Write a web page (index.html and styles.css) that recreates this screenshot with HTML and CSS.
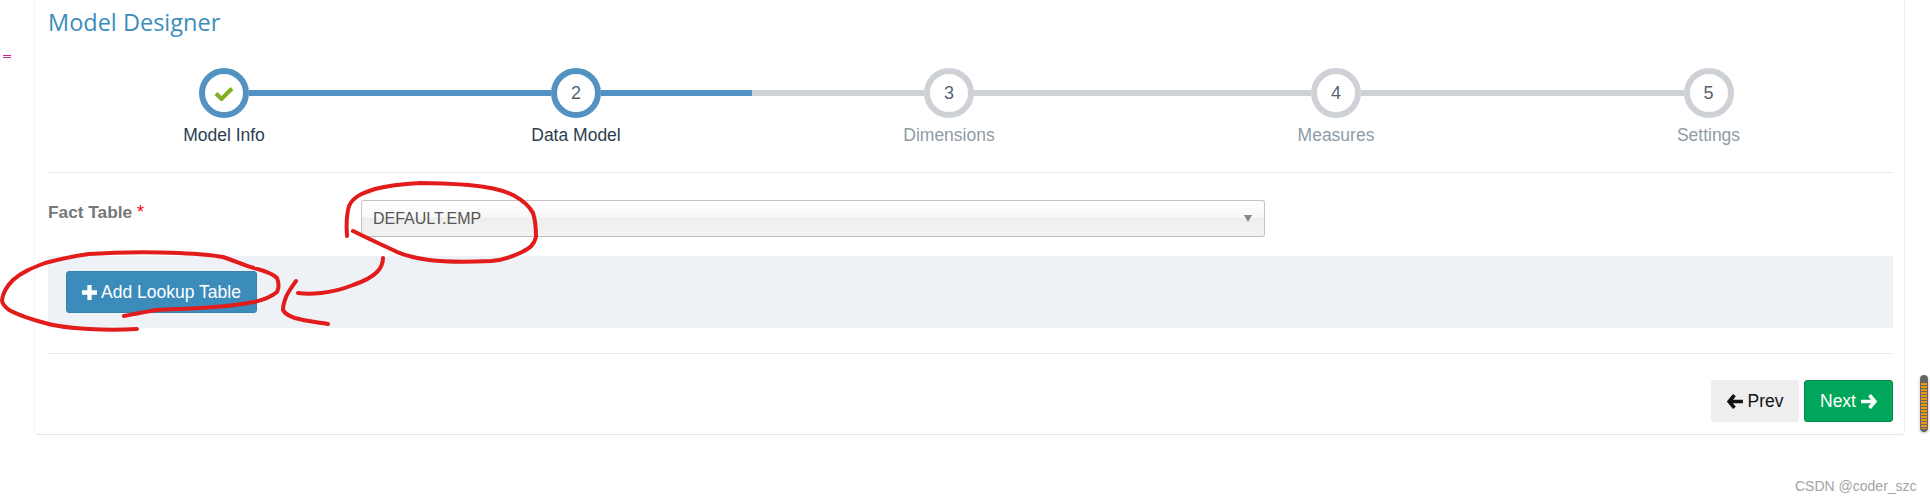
FILE: index.html
```html
<!DOCTYPE html>
<html>
<head>
    <title>Model Designer</title>
    <link rel="stylesheet" href="styles.css">
</head>
<body>
    <span class="stray-mark"></span>
    <div class="card">
        <h1 class="title">Model Designer</h1>

        <div class="wizard">
            <div class="step done">
                <div class="track">
                    <span class="seg none"></span>
                    <span class="circle">
                        <svg class="check" viewBox="0 0 20 16" width="20" height="16"><path d="M2 8.5 7.5 14 18 3.5" fill="none" stroke="#7fb21d" stroke-width="4"/></svg>
                    </span>
                    <span class="seg"></span>
                </div>
                <div class="step-label">Model Info</div>
            </div>
            <div class="step done">
                <div class="track">
                    <span class="seg"></span>
                    <span class="circle">2</span>
                    <span class="seg"></span>
                </div>
                <div class="step-label">Data Model</div>
            </div>
            <div class="step">
                <div class="track">
                    <span class="seg"></span>
                    <span class="circle">3</span>
                    <span class="seg"></span>
                </div>
                <div class="step-label">Dimensions</div>
            </div>
            <div class="step">
                <div class="track">
                    <span class="seg"></span>
                    <span class="circle">4</span>
                    <span class="seg"></span>
                </div>
                <div class="step-label">Measures</div>
            </div>
            <div class="step">
                <div class="track">
                    <span class="seg"></span>
                    <span class="circle">5</span>
                    <span class="seg none"></span>
                </div>
                <div class="step-label">Settings</div>
            </div>
        </div>

        <div class="form-row">
            <label class="field-label">Fact Table <span class="required">*</span></label>
            <div class="select-box">
                <span>DEFAULT.EMP</span>
                <span class="caret"></span>
            </div>
        </div>

        <div class="lookup-band">
            <button class="btn btn-add">
                <svg viewBox="0 0 14 14" width="15" height="15"><path d="M5 0h4v5h5v4H9v5H5V9H0V5h5z" fill="#fff"/></svg>
                Add Lookup Table
            </button>
        </div>

        <div class="actions">
            <button class="btn btn-prev">
                <svg viewBox="0 0 16 14" width="17" height="15"><path d="M7 1 2 7l5 6M2.5 7H15" fill="none" stroke="#111" stroke-width="3.4"/></svg>
                Prev
            </button>
            <button class="btn btn-next">
                Next
                <svg viewBox="0 0 16 14" width="17" height="15"><path d="M9 1l5 6-5 6M13.5 7H1" fill="none" stroke="#fff" stroke-width="3.4"/></svg>
            </button>
        </div>
    </div>

    <div class="scroll-thumb"></div>
    <div class="watermark">CSDN @coder_szc</div>

    <!-- red pen marks drawn over the screenshot -->
    <svg class="pen" viewBox="0 0 1930 502" width="1930" height="502">
        <path d="M347 236C346 222 347 213 349 206C353 197 362 193 375 189C390 185 402 184 420 183C440 183 455 184 469 185C490 187 505 191 513 195C524 201 530 207 533 213C536 222 536 230 536 237C534 245 530 248 522 252C512 257 503 260 491 261C470 262 445 262 429 260C415 258 402 255 393 250C380 244 365 237 353 231"/>
        <path d="M383 258C383 264 381 268 377 272C370 279 362 282 353 285C343 289 332 292 321 293C312 294 305 294 298 293"/>
        <path d="M296 281C291 288 288 292 286 297C284 302 283 306 283 310C285 314 289 316 295 318C305 321 316 322 328 324"/>
        <path d="M137 329C120 330 105 330 89 329C72 328 58 327 45 323C30 319 18 315 9 310C4 306 2 303 2 300C3 292 7 286 13 280C22 272 32 268 45 263C60 259 74 256 89 254C120 252 150 252 179 253C198 254 212 255 223 257C235 261 244 265 254 268C265 271 273 274 277 278C279 283 279 288 277 292C271 297 263 300 254 302C238 305 220 307 201 308C185 309 170 309 156 310C145 312 134 314 124 316"/>
    </svg>
</body>
</html>
```

FILE: styles.css
```css
* {
    box-sizing: border-box;
}
html, body {
    margin: 0;
    height: 502px;
    overflow: hidden;
}
body {
    position: relative;
    background: #fff;
    font-family: "Liberation Sans", Arial, sans-serif;
    color: #333;
}
.card {
    width: 1871px;
    height: 435px;
    margin-left: 34px;
    padding: 0 11px 0 13px;
    background: #fff;
    border-left: 1px solid #f6f6f6;
    border-bottom: 1px solid #e6e6e6;
    border-right: 1px solid #f2f2f2;
    border-radius: 0 0 4px 4px;
}
.title {
    margin: 0;
    padding-top: 7px;
    height: 68px;
    font-family: "Open Sans", sans-serif;
    font-size: 23.5px;
    font-weight: 400;
    line-height: 30px;
    color: #3c8dbc;
}
.wizard {
    display: grid;
    grid-template-columns: 352px 352px 394px 380px 365px;
    height: 105px;
    border-bottom: 1px solid #e9ebee;
}
.track {
    display: flex;
    align-items: center;
    height: 50px;
}
.seg {
    flex: 1;
    height: 6px;
    background: #ced1d6;
}
.seg.none {
    background: none;
}
.circle {
    display: flex;
    align-items: center;
    justify-content: center;
    width: 50px;
    height: 50px;
    border: 6px solid #ced1d6;
    border-radius: 50%;
    background: #fff;
    font-size: 18px;
    color: #546474;
}
.step.done .seg:not(.none) {
    background: #5293c4;
}
.step.done .circle {
    border-color: #5293c4;
}
.step-label {
    margin-top: 5px;
    text-align: center;
    font-size: 17.5px;
    line-height: 24px;
    color: #8f9ba6;
}
.step.done .step-label {
    color: #2c3e50;
}
.form-row {
    display: flex;
    height: 83px;
    padding-top: 27px;
}
.field-label {
    width: 313px;
    padding-top: 2px;
    font-size: 17.3px;
    font-weight: bold;
    line-height: 20px;
    color: #777;
}
.required {
    color: #f00;
    font-size: 18px;
    font-weight: normal;
}
.select-box {
    display: flex;
    align-items: center;
    justify-content: space-between;
    width: 904px;
    height: 37px;
    padding: 0 12px 0 11px;
    border: 1px solid #c4c4c4;
    border-bottom-color: #bdbdbd;
    border-radius: 3px;
    background: linear-gradient(#fff 0, #f8f8f8 45%, #eee 50%, #f2f2f2 100%);
    font-size: 16px;
    color: #555;
}
.caret {
    width: 0;
    height: 0;
    border-left: 4px solid transparent;
    border-right: 4px solid transparent;
    border-top: 7px solid #888;
}
.lookup-band {
    height: 72px;
    padding: 15px 18px;
    background: #eef1f6;
}
.btn {
    display: inline-flex;
    align-items: center;
    justify-content: center;
    gap: 4px;
    height: 42px;
    border: 1px solid transparent;
    border-radius: 3px;
    font-family: "Liberation Sans", Arial, sans-serif;
    font-size: 17.5px;
    padding: 0;
}
.btn-add {
    width: 191px;
    background: #3c8cbb;
    border-color: #3a82ae;
    color: #fff;
}
.actions {
    display: flex;
    justify-content: flex-end;
    gap: 5px;
    margin-top: 25px;
    padding-top: 26px;
    border-top: 1px solid #e9ebee;
}
.btn-prev {
    width: 88px;
    background: #eee;
    color: #111;
}
.btn-next {
    width: 89px;
    background: #00a65a;
    border-color: #008d4c;
    color: #fff;
}
.stray-mark {
    position: absolute;
    left: 3px;
    top: 55px;
    width: 8px;
    height: 4px;
    background: repeating-linear-gradient(#c2298a 0, #c2298a 1px, #fff 1px, #fff 2px);
}
.scroll-thumb {
    position: absolute;
    left: 1920px;
    top: 375px;
    width: 8px;
    height: 57px;
    border-radius: 4px;
    border: 1px solid #666;
    border-top-width: 8px;
    border-bottom-width: 3px;
    background: repeating-linear-gradient(#f0950f 0, #f0950f 2px, #6e6a62 2px, #6e6a62 3px);
    box-shadow: 0 1px 3px rgba(0,0,0,.25);
}
.watermark {
    position: absolute;
    left: 1795px;
    top: 478px;
    font-size: 14px;
    line-height: 16px;
    color: #a3a3a3;
}
.pen {
    position: absolute;
    left: 0;
    top: 0;
    pointer-events: none;
}
.pen path {
    fill: none;
    stroke: #e21b1b;
    stroke-width: 4;
    stroke-linecap: round;
    stroke-linejoin: round;
}
```
